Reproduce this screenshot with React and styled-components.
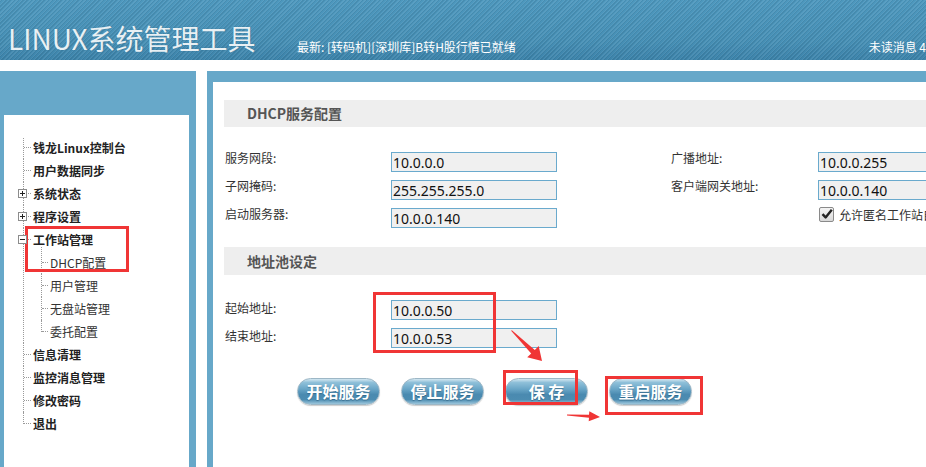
import React from 'react';
import styled, { createGlobalStyle } from 'styled-components';

const GlobalStyle = createGlobalStyle`
  html, body {
    margin: 0;
    padding: 0;
  }
  body {
    width: 926px;
    height: 467px;
    overflow: hidden;
    background: #fff;
    font-family: "Noto Sans CJK SC", "Noto Sans", sans-serif;
  }
  * {
    box-sizing: border-box;
  }
`;

const menu = [
  { label: '钱龙Linux控制台' },
  { label: '用户数据同步' },
  { label: '系统状态', toggle: 'plus' },
  { label: '程序设置', toggle: 'plus' },
  {
    label: '工作站管理',
    toggle: 'minus',
    children: ['DHCP配置', '用户管理', '无盘站管理', '委托配置'],
  },
  { label: '信息清理' },
  { label: '监控消息管理' },
  { label: '修改密码' },
  { label: '退出' },
];

const App = () => {
  return (
    <>
      <GlobalStyle />
      <Page>
        <Header>
          <Title>LINUX系统管理工具</Title>
          <News>最新: [转码机][深圳库]B转H股行情已就绪</News>
          <Unread>未读消息 4</Unread>
        </Header>

        <Body>
          <Sidebar>
            <SideInner>
              <Tree>
                {menu.map((item) => (
                  <TreeItem key={item.label}>
                    {item.toggle && <Toggle $kind={item.toggle} />}
                    <TreeLabel>{item.label}</TreeLabel>
                    {item.children && (
                      <SubTree>
                        {item.children.map((child) => (
                          <SubItem key={child}>
                            <SubLabel>{child}</SubLabel>
                          </SubItem>
                        ))}
                      </SubTree>
                    )}
                  </TreeItem>
                ))}
              </Tree>
            </SideInner>
          </Sidebar>

          <Main>
            <Content>
              <SectionHeader>DHCP服务配置</SectionHeader>
              <FormGrid $labelTop={0}>
                <Label>服务网段:</Label>
                <Field readOnly value="10.0.0.0" />
                <span />
                <Label>广播地址:</Label>
                <Field readOnly value="10.0.0.255" />

                <Label>子网掩码:</Label>
                <Field readOnly value="255.255.255.0" />
                <span />
                <Label>客户端网关地址:</Label>
                <Field readOnly value="10.0.0.140" />

                <Label>启动服务器:</Label>
                <Field readOnly value="10.0.0.140" />
                <span />
                <span />
                <CheckRow>
                  <CheckBox>
                    <svg width="12" height="12" viewBox="0 0 12 12">
                      <path d="M1.5 6.2 L4.6 9.4 L10.8 1.8" fill="none" stroke="#222" strokeWidth="2.4" strokeLinejoin="round" />
                    </svg>
                  </CheckBox>
                  允许匿名工作站自动获取地址
                </CheckRow>
              </FormGrid>

              <SectionHeader $tall>地址池设定</SectionHeader>
              <FormGrid $labelTop={2}>
                <Label>起始地址:</Label>
                <Field readOnly value="10.0.0.50" />
                <span />
                <span />
                <span />
                <Label>结束地址:</Label>
                <Field readOnly value="10.0.0.53" />
              </FormGrid>

              <ButtonRow>
                <ActionButton>开始服务</ActionButton>
                <ActionButton>停止服务</ActionButton>
                <ActionButton>保 存</ActionButton>
                <ActionButton>重启服务</ActionButton>
              </ButtonRow>
            </Content>
          </Main>
        </Body>

        <Mark $x={25} $y={226} $w={104} $h={46} />
        <Mark $x={373} $y={292} $w={123} $h={61} />
        <Mark $x={503} $y={370} $w={75} $h={35} />
        <Mark $x={605} $y={376} $w={98} $h={39} />
        <ArrowLayer width="926" height="467" viewBox="0 0 926 467">
          <polygon
            points="511.9,330.2 534.8,349.9 538.7,346.1 542,361 527.2,357.2 531.2,353.4 511.1,330.8"
            fill="#f03535"
          />
          <polygon
            points="567,414.6 589,414.8 589.3,411.3 600,417 588.7,421.3 589,417.8 567,415.4"
            fill="#f03535"
          />
        </ArrowLayer>
      </Page>
    </>
  );
};

// Styled components
const Page = styled.div`
  position: relative;
  display: flex;
  flex-direction: column;
  width: 926px;
  height: 467px;
  overflow: hidden;
`;

const Header = styled.header`
  flex: 0 0 60px;
  display: flex;
  align-items: flex-end;
  padding-left: 8px;
  color: #fff;
  background:
    repeating-linear-gradient(135deg, rgba(255, 255, 255, 0.07) 0 1px, rgba(0, 0, 0, 0.07) 1px 2px, transparent 2px 3px),
    linear-gradient(#4d98be, #468fb5 70%, #3c83aa);
`;

const Title = styled.h1`
  flex: 0 0 289px;
  margin: 0 0 8px;
  font-size: 28px;
  font-weight: 400;
  line-height: 28px;
  white-space: nowrap;
  color: #e8f0f4;
  text-shadow: 0 0 1px rgba(0, 40, 70, 0.35);
`;

const News = styled.div`
  flex: 1;
  margin-bottom: 6px;
  font-size: 12px;
  line-height: 14px;
  white-space: nowrap;
`;

const Unread = styled.div`
  flex: 0 0 57px;
  margin-bottom: 6px;
  font-size: 12px;
  line-height: 14px;
  white-space: nowrap;
`;

const Body = styled.div`
  flex: 1;
  display: flex;
  gap: 11px;
  margin-top: 11px;
  min-height: 0;
`;

const Sidebar = styled.aside`
  flex: 0 0 196px;
  display: flex;
  padding: 44px 7px 0 4px;
  background: #67a8c9;
`;

const SideInner = styled.nav`
  flex: 1;
  padding-top: 21px;
  background: #fff;
`;

const Tree = styled.ul`
  margin: 0 0 0 19px;
  padding: 0;
  list-style: none;
`;

const TreeItem = styled.li`
  position: relative;
  padding-left: 10px;

  &::before {
    content: '';
    position: absolute;
    left: 1px;
    top: 11px;
    width: 7px;
    border-top: 1px dotted #9a9a9a;
  }

  &::after {
    content: '';
    position: absolute;
    left: 0;
    top: 0;
    bottom: 0;
    border-left: 1px dotted #9a9a9a;
  }

  &:first-child::after {
    top: 2px;
  }

  &:last-child::after {
    bottom: auto;
    height: 12px;
  }
`;

const Toggle = styled.span`
  position: absolute;
  z-index: 1;
  left: -5px;
  top: 7px;
  width: 9px;
  height: 9px;
  border: 1px solid #8c8c8c;
  background: ${({ $kind }) =>
    $kind === 'plus'
      ? 'linear-gradient(#222, #222) center / 5px 1px no-repeat, linear-gradient(#222, #222) center / 1px 5px no-repeat, #fff'
      : 'linear-gradient(#222, #222) center / 5px 1px no-repeat, #fff'};
`;

const TreeLabel = styled.div`
  height: 23px;
  font-size: 12px;
  font-weight: 700;
  line-height: 23px;
  color: #222;
  white-space: nowrap;
`;

const SubTree = styled.ul`
  margin: 0 0 0 8px;
  padding: 0;
  list-style: none;
`;

const SubItem = styled(TreeItem)`
  padding-left: 9px;

  &::before {
    width: 6px;
  }

  &:first-child::after {
    top: -4px;
  }
`;

const SubLabel = styled.div`
  height: 23px;
  font-size: 12px;
  line-height: 23px;
  color: #333;
  white-space: nowrap;
`;

const Main = styled.main`
  flex: 1;
  display: flex;
  padding: 11px 0 0 6px;
  background: #67a8c9;
  min-width: 0;
`;

const Content = styled.section`
  flex: 1;
  padding: 18px 0 0 11px;
  background: #fff;
  min-width: 0;
  overflow: hidden;
`;

const SectionHeader = styled.h2`
  margin: ${({ $tall }) => ($tall ? '19px 0 0' : '0')};
  height: ${({ $tall }) => ($tall ? '28px' : '27px')};
  padding-left: 23px;
  font-size: 14px;
  font-weight: 700;
  line-height: ${({ $tall }) => ($tall ? '28px' : '27px')};
  color: #555;
  background: #eeeeee;
`;

const FormGrid = styled.div`
  display: grid;
  grid-template-columns: 166px 166px 114px 147px 166px;
  grid-auto-rows: 20px;
  row-gap: 8px;
  margin-top: 25px;
  padding-left: 1px;

  & > label {
    margin-top: ${({ $labelTop }) => $labelTop}px;
  }
`;

const Label = styled.label`
  align-self: start;
  font-size: 12px;
  line-height: 12px;
  color: #333;
  white-space: nowrap;
`;

const Field = styled.input`
  width: 166px;
  height: 20px;
  margin: 0;
  padding: 0 1px;
  border: 1px solid #6aaacd;
  background: #f0f0f0;
  font-family: "Noto Sans", sans-serif;
  font-size: 14px;
  color: #111;
  outline: none;
`;

const CheckRow = styled.div`
  display: flex;
  align-items: center;
  gap: 5px;
  margin: -2px 0 0 1px;
  height: 16px;
  font-size: 12px;
  color: #333;
  white-space: nowrap;
`;

const CheckBox = styled.span`
  display: flex;
  align-items: center;
  justify-content: center;
  flex: 0 0 15px;
  height: 15px;
  border: 1px solid #8a8a8a;
  border-radius: 2px;
  background: linear-gradient(#f4f4f4, #d8d8d8);
`;

const ButtonRow = styled.div`
  display: flex;
  gap: 21px;
  margin-top: 30px;
  padding-left: 73px;
`;

const ActionButton = styled.button`
  flex: 0 0 83px;
  height: 27px;
  padding: 0;
  border: 1px solid #9db7c6;
  border-radius: 14px;
  background: linear-gradient(
    to bottom,
    #d3e7f1 0%,
    #8fc0d9 14%,
    #6aa6c7 40%,
    #4a8ab0 62%,
    #4c8cb1 82%,
    #9cc6dc 100%
  );
  box-shadow: 0 1px 1px rgba(0, 0, 0, 0.2);
  font-family: "Noto Sans CJK SC", sans-serif;
  font-size: 16px;
  font-weight: 700;
  line-height: 25px;
  color: #fff;
  text-shadow: 0 1px 1px rgba(0, 40, 70, 0.35);
`;

const Mark = styled.div`
  position: absolute;
  left: ${({ $x }) => $x}px;
  top: ${({ $y }) => $y}px;
  width: ${({ $w }) => $w}px;
  height: ${({ $h }) => $h}px;
  border: 3px solid #f03535;
  pointer-events: none;
`;

const ArrowLayer = styled.svg`
  position: absolute;
  left: 0;
  top: 0;
  pointer-events: none;
`;

export default App;
